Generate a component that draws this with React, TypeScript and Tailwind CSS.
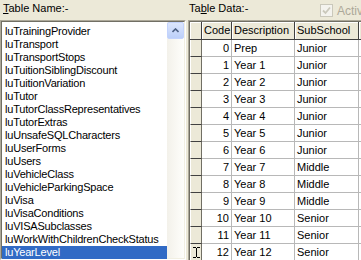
import React from 'react';

const tables = [
  'luTrainingProvider',
  'luTransport',
  'luTransportStops',
  'luTuitionSiblingDiscount',
  'luTuitionVariation',
  'luTutor',
  'luTutorClassRepresentatives',
  'luTutorExtras',
  'luUnsafeSQLCharacters',
  'luUserForms',
  'luUsers',
  'luVehicleClass',
  'luVehicleParkingSpace',
  'luVisa',
  'luVisaConditions',
  'luVISASubclasses',
  'luWorkWithChildrenCheckStatus',
  'luYearLevel',
];

const rows: [number, string, string][] = [
  [0, 'Prep', 'Junior'],
  [1, 'Year 1', 'Junior'],
  [2, 'Year 2', 'Junior'],
  [3, 'Year 3', 'Junior'],
  [4, 'Year 4', 'Junior'],
  [5, 'Year 5', 'Junior'],
  [6, 'Year 6', 'Junior'],
  [7, 'Year 7', 'Middle'],
  [8, 'Year 8', 'Middle'],
  [9, 'Year 9', 'Middle'],
  [10, 'Year 10', 'Senior'],
  [11, 'Year 11', 'Senior'],
  [12, 'Year 12', 'Senior'],
];

const font = { fontFamily: '"Liberation Sans", Arial, sans-serif' };

function HeaderCell({ w, children }: { w: string; children?: React.ReactNode }) {
  return (
    <div
      className={`${w} h-full shrink-0 flex items-center pl-[2px] border-r border-b border-[#404040] shadow-[inset_1px_1px_0_#fff] bg-[#ECE9D8] overflow-hidden whitespace-nowrap`}
    >
      {children}
    </div>
  );
}

export default function App() {
  return (
    <div
      className="w-[361px] h-[260px] overflow-hidden bg-[#ECE9D8] flex text-[11px] text-black leading-none"
      style={font}
    >
      {/* Left: table list */}
      <div className="w-[186px] shrink-0 flex flex-col">
        <div className="h-[20px] shrink-0 pl-[3px] pt-[3px]">
          <u>T</u>able Name:-
        </div>
        <div className="flex-1 min-h-0 border-t border-l border-[#ACA899] border-r-white border-b-white border-r border-b">
          <div className="h-full border-t border-l border-[#716F64] border-r border-b border-r-[#F1EFE2] border-b-[#F1EFE2] flex">
            <div className="flex-1 bg-white pt-[3px] tracking-[-0.2px]">
              {tables.map((t, i) => (
                <div
                  key={t}
                  className={`h-[13px] flex items-center pl-[3px] whitespace-nowrap ${
                    i === tables.length - 1 ? 'bg-[#316AC5] text-white' : ''
                  }`}
                >
                  {t}
                </div>
              ))}
            </div>
            {/* XP scrollbar */}
            <div className="w-[17px] shrink-0 bg-gradient-to-r from-[#F3F1EA] to-[#FEFEFB] flex flex-col">
              <div className="h-[17px] rounded-[2px] border border-[#C3D3FD] bg-gradient-to-b from-[#DCE6FD] to-[#BCCFF9] flex items-center justify-center">
                <svg width="7" height="5" viewBox="0 0 7 5">
                  <path d="M0.5 4L3.5 1L6.5 4" fill="none" stroke="#4D6185" strokeWidth="1.6" />
                </svg>
              </div>
            </div>
          </div>
        </div>
      </div>

      <div className="w-[2px] shrink-0" />

      {/* Right: table data grid */}
      <div className="flex-1 min-w-0 flex flex-col">
        <div className="h-[20px] shrink-0 flex items-start pt-[3px] pl-[1px] relative">
          <span>
            Ta<u>b</u>le Data:-
          </span>
          <div className="absolute left-[132px] top-[4px] flex items-center gap-[4px]">
            <div className="w-[13px] h-[13px] border border-[#CAC8BB] bg-[#F4F3EE] flex items-center justify-center">
              <svg width="9" height="9" viewBox="0 0 9 9">
                <path d="M1 4.5L3.5 7L8 1.5" fill="none" stroke="#CAC8BB" strokeWidth="1.8" />
              </svg>
            </div>
            <span className="text-[12px] text-[#ACA899] whitespace-nowrap">Active</span>
          </div>
        </div>
        <div className="flex-1 min-h-0 border-t border-l border-[#ACA899]">
          <div className="h-full border-t border-l border-[#716F64] flex flex-col bg-white">
            <div className="h-[18px] shrink-0 flex">
              <HeaderCell w="w-[12px]" />
              <HeaderCell w="w-[30px]">Code</HeaderCell>
              <HeaderCell w="w-[63px]">Description</HeaderCell>
              <HeaderCell w="w-[64px]">SubSchool</HeaderCell>
              <HeaderCell w="w-[40px]" />
            </div>
            {rows.map(([code, desc, school], i) => (
              <div key={code} className="h-[17px] shrink-0 flex">
                <div className="w-[12px] h-full shrink-0 bg-[#ECE9D8] border-l border-l-white border-b border-b-[#404040] border-r border-r-[#716F64] flex items-center justify-center">
                  {i === rows.length - 1 && (
                    <svg width="7" height="11" viewBox="0 0 7 11">
                      <path d="M0 0.5H3M4 0.5H7M3.5 1V10M0 10.5H3M4 10.5H7" stroke="#000" strokeWidth="1" fill="none" />
                    </svg>
                  )}
                </div>
                <div className="w-[30px] h-full shrink-0 flex items-center justify-end pr-[2px] border-r border-b border-[#B8B8B8]">
                  {code}
                </div>
                <div className="w-[63px] h-full shrink-0 flex items-center pl-[2px] border-r border-b border-[#B8B8B8] whitespace-nowrap">
                  {desc}
                </div>
                <div className="w-[64px] h-full shrink-0 flex items-center pl-[2px] border-r border-b border-[#B8B8B8] whitespace-nowrap">
                  {school}
                </div>
                <div className="w-[40px] h-full shrink-0 border-b border-[#B8B8B8]" />
              </div>
            ))}
          </div>
        </div>
      </div>
    </div>
  );
}
